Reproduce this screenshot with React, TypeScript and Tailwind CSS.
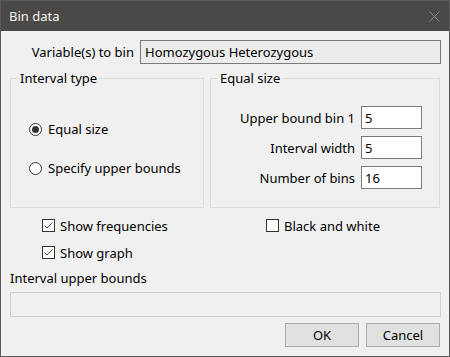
import React from 'react';

function Radio({ checked, label }: { checked?: boolean; label: string }) {
  return (
    <div className="flex items-center h-[16px]">
      <span className="w-[13px] h-[13px] rounded-full border border-[#333333] bg-white flex items-center justify-center">
        {checked && <span className="w-[7px] h-[7px] rounded-full bg-[#333333]" />}
      </span>
      <span className="ml-[6px]">{label}</span>
    </div>
  );
}

function Check({ checked, label }: { checked?: boolean; label: string }) {
  return (
    <div className="flex items-center h-[19px]">
      <span className="w-[13px] h-[13px] border border-[#333333] bg-white flex items-center justify-center">
        {checked && (
          <svg width="11" height="11" viewBox="0 0 11 11">
            <path d="M1.5 5.5 L4 8 L9.5 2.5" fill="none" stroke="#444" strokeWidth="1" />
          </svg>
        )}
      </span>
      <span className="ml-[5px]">{label}</span>
    </div>
  );
}

function Group({ title, className, children }: { title: string; className: string; children: React.ReactNode }) {
  return (
    <div className={`relative border border-[#dcdcdc] ${className}`}>
      {/* legend sits over the top border */}
      <span className="absolute -top-[9px] left-[7px] px-[2px] bg-[#f0f0f0] leading-[16px]">{title}</span>
      {children}
    </div>
  );
}

const sizes = [
  { label: 'Upper bound bin 1', value: '5' },
  { label: 'Interval width', value: '5' },
  { label: 'Number of bins', value: '16' },
];

export default function App() {
  return (
    <div className="w-[450px] h-[357px] bg-[#f0f0f0] border border-[#5a5a5a] flex flex-col font-['Noto_Sans',sans-serif] text-[13px] leading-[16px] text-black">
      <div className="h-[30px] bg-[#4a4947] flex items-center justify-between pl-[8px] pr-[9px] text-[#f2f2f2]">
        <span>Bin data</span>
        <svg width="11" height="11" viewBox="0 0 11 11">
          <path d="M0.5 0.5 L10.5 10.5 M10.5 0.5 L0.5 10.5" stroke="#8a8a8a" strokeWidth="1" />
        </svg>
      </div>

      <div className="flex flex-col pl-[9px] pr-[8px] pt-[9px] pb-[9px]">
        <div className="flex items-center h-[24px]">
          <span className="w-[124px] text-right">Variable(s) to bin</span>
          <div className="ml-[6px] w-[301px] h-[24px] border border-[#7a7a7a] bg-[#ececec] pl-[4px] flex items-center">
            Homozygous Heterozygous
          </div>
        </div>

        <div className="flex mt-[14px] h-[130px]">
          <Group title="Interval type" className="w-[194px] pt-[42px] pl-[18px]">
            <div className="flex flex-col gap-[23px]">
              <Radio checked label="Equal size" />
              <Radio label="Specify upper bounds" />
            </div>
          </Group>
          <Group title="Equal size" className="ml-[6px] w-[230px] pt-[27px] pr-[17px]">
            <div className="flex flex-col gap-[7px]">
              {sizes.map((s) => (
                <div key={s.label} className="flex items-center justify-end h-[23px]">
                  <span>{s.label}</span>
                  <div className="ml-[6px] w-[61px] h-[23px] border border-[#7a7a7a] bg-white pl-[3px] flex items-center">
                    {s.value}
                  </div>
                </div>
              ))}
            </div>
          </Group>
        </div>

        <div className="flex mt-[8px] pl-[32px]">
          <div className="w-[224px]">
            <Check checked label="Show frequencies" />
          </div>
          <Check label="Black and white" />
        </div>
        <div className="mt-[8px] pl-[32px]">
          <Check checked label="Show graph" />
        </div>

        <div className="mt-[8px]">Interval upper bounds</div>
        <div className="mt-[6px] h-[25px] w-[431px] border border-[#d0d0d0] bg-[#f0f0f0]" />

        <div className="mt-[6px] flex justify-end gap-[7px] pr-[1px]">
          <button className="w-[74px] h-[24px] bg-[#e1e1e1] border border-[#adadad]">OK</button>
          <button className="w-[74px] h-[24px] bg-[#e1e1e1] border border-[#adadad]">Cancel</button>
        </div>
      </div>
    </div>
  );
}
